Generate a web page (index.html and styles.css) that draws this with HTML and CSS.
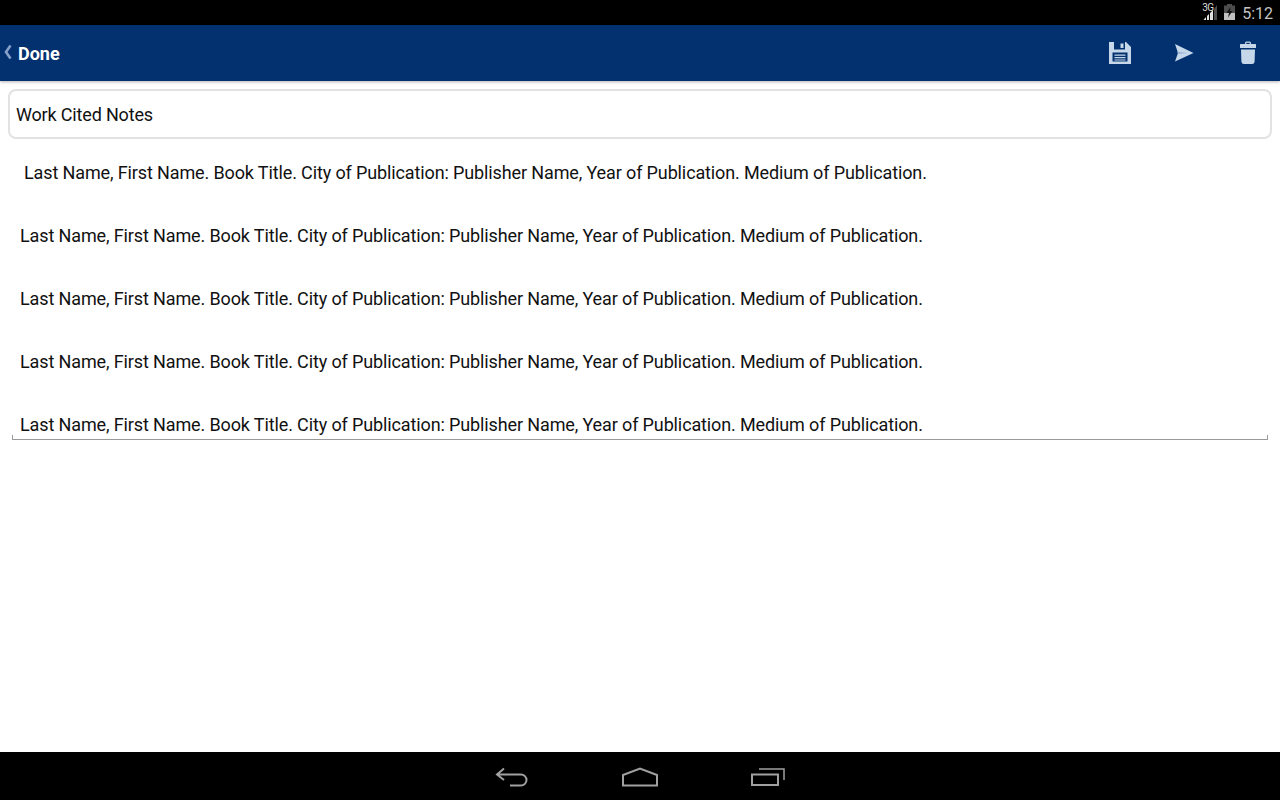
FILE: index.html
```html
<!DOCTYPE html>
<html lang="en">
<head>
<meta charset="utf-8">
<title>Work Cited Notes</title>
<link rel="stylesheet" href="styles.css">
</head>
<body>
<div class="screen">
  <div class="status-bar">
    <div class="signal">
      <span class="net">3G</span>
      <svg width="15" height="16" viewBox="0 0 15 16"><path d="M1.500 16 L4 13 V16 Z M5 16 V12 L7 10 V16 Z M8 16 V9 L11 6 V16 Z" fill="#e0e0e0"/><path d="M12 5 L15 1 V16 H12 Z" fill="#4a4a4a"/></svg>
    </div>
    <svg class="battery" width="11" height="16" viewBox="0 0 11 16"><path d="M3 0 H8 V1.500 H11 V16 H0 V1.500 H3 Z" fill="#4d4d4d"/><path d="M0 9 H11 V16 H0 Z" fill="#c0c0c0"/><path d="M6.500 3 L2.500 9 H5 L4 13.500 L8.500 7 H6 Z" fill="#111"/></svg>
    <span class="clock">5:12</span>
  </div>
  <header class="action-bar">
    <div class="back">
      <svg class="chevron" width="9" height="16" viewBox="0 0 9 16"><path d="M7.500 1.500 L3 8 L7.500 14.500" fill="none" stroke="#86a1c8" stroke-width="2.600"/></svg>
      <span class="done">Done</span>
    </div>
    <div class="actions">
      <div class="action">
        <svg width="24" height="24" viewBox="0 0 24 24"><path fill-rule="evenodd" fill="#c6d7ea" d="M1 1 H18 L23 6 V23 H1 Z M6 1 V8.500 H17 V1 Z M12.500 2.500 H15.500 V7 H12.500 Z M4.500 11.500 V20.500 H19.500 V11.500 Z"/><path fill="#c6d7ea" d="M6.500 13.500 H17.500 V14.800 H6.500 Z M6.500 16 H17.500 V17.300 H6.500 Z M6.500 18.500 H17.500 V19.600 H6.500 Z"/></svg>
      </div>
      <div class="action">
        <svg width="20" height="20" viewBox="0 0 20 20"><path fill="#c6d7ea" d="M1 1 L19.500 10 L1 18.500 L4 10 Z"/><path fill="#8fabcf" d="M3 9 L14 10 L4 10.800 Z"/></svg>
      </div>
      <div class="action">
        <svg width="18" height="24" viewBox="0 0 18 24"><path fill="#c6d7ea" d="M6 3 V2 Q6 0.500 7.500 0.500 H10.500 Q12 0.500 12 2 V3 H16.500 Q17 3 17 3.500 V7 H1 V3.500 Q1 3 1.500 3 Z"/><path fill="#03306f" d="M7.300 3 H10.700 V1.800 H7.300 Z"/><path fill="#c6d7ea" d="M2 8.500 H16 L15.600 20.500 Q15.500 23 13 23 H5 Q2.500 23 2.400 20.500 Z"/></svg>
      </div>
    </div>
  </header>
  <main class="content">
    <div class="title-field">Work Cited Notes</div>
    <div class="notes">
      <p class="note first">Last Name, First Name. Book Title. City of Publication: Publisher Name, Year of Publication. Medium of Publication.</p>
      <p class="note">Last Name, First Name. Book Title. City of Publication: Publisher Name, Year of Publication. Medium of Publication.</p>
      <p class="note">Last Name, First Name. Book Title. City of Publication: Publisher Name, Year of Publication. Medium of Publication.</p>
      <p class="note">Last Name, First Name. Book Title. City of Publication: Publisher Name, Year of Publication. Medium of Publication.</p>
      <p class="note">Last Name, First Name. Book Title. City of Publication: Publisher Name, Year of Publication. Medium of Publication.</p>
    </div>
  </main>
  <footer class="nav-bar">
    <svg width="34" height="22" viewBox="0 0 34 22"><path d="M9 2.500 L2 8.500 L9 14 M2 8.500 H26 A5.500 5.500 0 0 1 26 19.500 H15" fill="none" stroke="#a0a0a0" stroke-width="2"/></svg>
    <svg width="36" height="20" viewBox="0 0 36 20"><path d="M1 18.500 V8 L18 1.500 L35 8 V18.500 Z" fill="none" stroke="#a0a0a0" stroke-width="2"/></svg>
    <svg width="34" height="18" viewBox="0 0 34 18"><path d="M1 6.500 H27 V17 H1 Z" fill="none" stroke="#a0a0a0" stroke-width="2"/><path d="M8 1 H33 V12" fill="none" stroke="#a0a0a0" stroke-width="1.500"/></svg>
  </footer>
</div>
</body>
</html>
```
FILE: styles.css
```css
* { box-sizing: border-box; }
html, body { margin: 0; padding: 0; }
body { font-family: Roboto, "Liberation Sans", sans-serif; background: #fff; }
.screen { width: 1280px; height: 800px; display: flex; flex-direction: column; overflow: hidden; background: #fff; }
.status-bar { height: 25px; background: #000; display: flex; align-items: center; justify-content: flex-end; padding: 0 7px 1px 0; flex: none; }
.signal { position: relative; width: 15px; height: 16px; margin-right: 7px; }
.signal svg { display: block; }
.net { position: absolute; left: 0; top: 0; font-size: 10px; line-height: 8px; font-weight: 400; color: #ddd; letter-spacing: -0.5px; }
.battery { margin-right: 7px; }
.clock { color: #c4c4c4; font-size: 16px; position: relative; top: 1px; }
.action-bar { height: 56px; background: #03306f; display: flex; align-items: center; justify-content: space-between; flex: none; position: relative; box-shadow: 0 1px 3px rgba(0,0,0,.3); }
.back { display: flex; align-items: center; padding-left: 3px; }
.chevron { margin-right: 6px; margin-top: -2px; }
.done { color: #fff; font-size: 18px; font-weight: 700; }
.actions { display: flex; padding-right: 0; }
.action { width: 64px; height: 56px; display: flex; align-items: center; justify-content: center; }
.content { flex: 1; padding: 8px 8px 0; }
.title-field { height: 50px; border: 2px solid #e2e2e2; border-radius: 8px; padding-left: 6px; font-size: 18px; line-height: 48px; letter-spacing: -0.17px; color: #111; }
.notes { margin: 2px 4px 0; padding: 0 8px 0; border-bottom: 1px solid #9a9a9a; position: relative; }
.notes::before, .notes::after { content: ""; position: absolute; bottom: 0; width: 1px; height: 4px; background: #9a9a9a; }
.notes::before { left: 0; }
.notes::after { right: 0; }
.note { margin: 0; height: 63px; font-size: 18px; line-height: 63px; letter-spacing: -0.125px; color: #111; white-space: nowrap; }
.note.first { padding-left: 4px; }
.note:last-child { height: 46px; }
.nav-bar { height: 48px; background: #000; display: flex; align-items: center; justify-content: center; gap: 93px; flex: none; padding-top: 1px; }
```
